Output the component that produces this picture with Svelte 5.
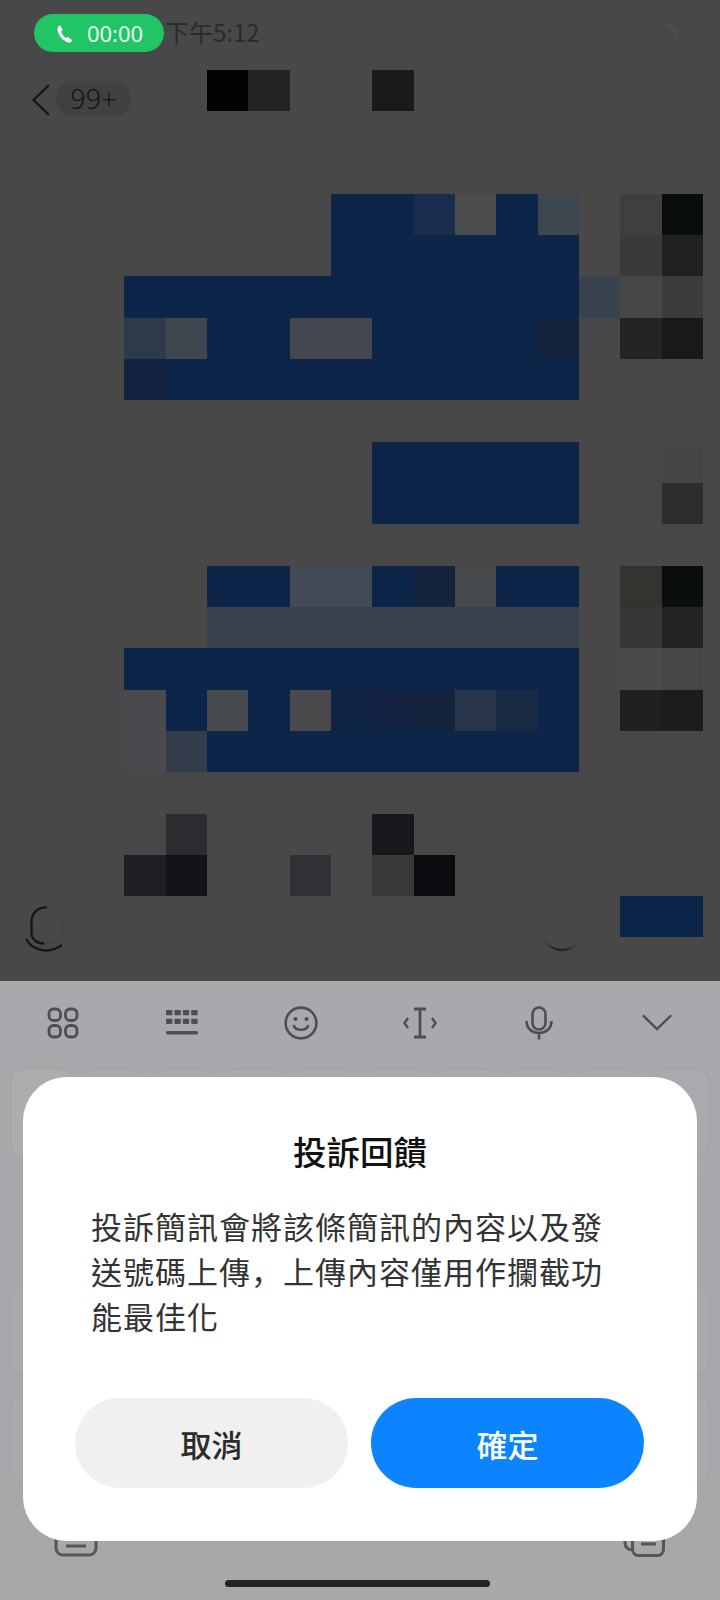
<script>
  const B = '#0c2549';
  const runs = [
    [-3,2,1,'#030303'],[-3,3,1,'#232323'],[-3,6,1,'#1a1a1a'],
    [0,5,2,B],[0,7,1,'#1a2d4c'],[0,8,1,'#4a4c4d'],[0,9,1,B],[0,10,1,'#3f4650'],[0,12,1,'#413f3e'],[0,13,1,'#0a0d0e'],
    [1,5,6,B],[1,12,1,'#3b3a39'],[1,13,1,'#1f2221'],
    [2,0,11,B],[2,11,1,'#39434e'],[2,12,1,'#474747'],[2,13,1,'#3c3c3c'],
    [3,0,1,'#2e394a'],[3,1,1,'#3f4650'],[3,2,2,B],[3,4,2,'#444750'],[3,6,4,B],[3,10,1,'#15233a'],[3,12,1,'#232423'],[3,13,1,'#18191b'],
    [4,0,1,'#142440'],[4,1,10,B],
    [6,6,5,B],[6,12,1,'#484645'],[6,13,1,'#454545'],
    [7,6,5,B],[7,12,1,'#464746'],[7,13,1,'#2c2e2d'],
    [9,2,2,B],[9,4,2,'#414a55'],[9,6,1,B],[9,7,1,'#15233f'],[9,8,1,'#474a4d'],[9,9,2,B],[9,12,1,'#333330'],[9,13,1,'#0b0e0e'],
    [10,2,9,'#394350'],[10,12,1,'#363636'],[10,13,1,'#212325'],
    [11,0,11,B],[11,12,1,'#4b4949'],[11,13,1,'#464646'],
    [12,0,1,'#494a4e'],[12,1,1,B],[12,2,1,'#474a4e'],[12,3,1,B],[12,4,1,'#4a4a4c'],[12,5,1,'#0f2444'],[12,6,1,'#122240'],[12,7,1,'#15243d'],[12,8,1,'#28354a'],[12,9,1,'#192a45'],[12,10,1,B],[12,12,1,'#1f2022'],[12,13,1,'#1c1d1f'],
    [13,0,1,'#494a4e'],[13,1,1,'#333c4a'],[13,2,9,B],
    [15,1,1,'#2b2c30'],[15,6,1,'#17181c'],
    [16,0,1,'#1e2025'],[16,1,1,'#121419'],[16,4,1,'#303136'],[16,6,1,'#393a3a'],[16,7,1,'#090b0f'],
    [17,12,2,'#0c2649']
  ];
  const keyRows = [10, 9, 10, 10];
  const kbCols = [0, 8.4, 16.8, 25.2];
</script>

<div class="page">
  <section class="chat">
    <header class="status">
      <div class="call">
        <svg class="phone" width="20" height="20" viewBox="0 0 18 18"><path d="M4.6 1.2 6.9 5.2 5.6 6.8C6.2 9 7.8 11.4 9.8 12.7L11.6 11.7 15.4 14.6C15 16.2 13.6 17 12 16.6 7.2 15.2 3.2 10.4 2.2 5.4 1.9 3.6 3 1.8 4.6 1.2Z" fill="#fff"/></svg>
        <span>00:00</span>
      </div>
      <span class="time">下午5:12</span>
    </header>

    <div class="nav">
      <svg width="20" height="32" viewBox="0 0 20 32"><path d="M18 1 2.5 16 18 31" fill="none" stroke="#141515" stroke-width="2.2"/></svg>
      <span class="count">99+</span>
    </div>

    <svg class="faint" width="12" height="16" viewBox="0 0 12 16"><path d="M2 1 9 8 10 15" fill="none" stroke="#535353" stroke-width="1.6"/></svg>

    <div class="mosaic">
      {#each runs as [r, c, s, color]}
        <i style="grid-row:{r + 4};grid-column:{c + 1} / span {s};background:{color}"></i>
      {/each}
    </div>

    <svg class="mic-left" width="42" height="50" viewBox="0 0 42 50" fill="none">
      <path d="M23 1.500C31 2 37 8 38 16V27C37.500 33 30 37.500 20 37.500" stroke="#424343" stroke-width="1.500"/>
      <path d="M23 1.500C13 1 7.500 8 7.500 16V27C7.500 33 13 37.500 20 37.500" stroke="#151617" stroke-width="2.300"/>
      <path d="M2 33C8 44 24 49 38 39" stroke="#151617" stroke-width="2.400"/>
    </svg>
    <svg class="arc-right" width="44" height="26" viewBox="0 0 44 26" fill="none">
      <defs>
        <linearGradient id="arcfade" x1="0" x2="1" y1="0" y2="0">
          <stop offset="0" stop-color="#4a4b4a"/>
          <stop offset="0.45" stop-color="#1e1f20"/>
          <stop offset="1" stop-color="#454645"/>
        </linearGradient>
      </defs>
      <path d="M2 7C8 19 24 26 38 13" stroke="url(#arcfade)" stroke-width="2.400"/>
    </svg>
  </section>

  <section class="ime">
    <div class="tools">
      <div class="tool">
        <svg width="32" height="32" viewBox="0 0 32 32" fill="none" stroke="#4d4e52" stroke-width="2.800">
          <rect x="2" y="2" width="11.500" height="11.500" rx="4.500"/><rect x="18.500" y="2" width="11.500" height="11.500" rx="4.500"/>
          <rect x="2" y="18.500" width="11.500" height="11.500" rx="4.500"/><rect x="18.500" y="18.500" width="11.500" height="11.500" rx="4.500"/>
        </svg>
      </div>
      <div class="tool">
        <svg width="32" height="26" viewBox="0 0 32 26" fill="#4d4e52">
          {#each kbCols as x}
            <rect {x} y="0" width="6.400" height="5.200" rx="1"/>
            <rect {x} y="8.800" width="6.400" height="5.200" rx="1"/>
          {/each}
          <rect x="0" y="21" width="32" height="3.400" rx="1.600"/>
        </svg>
      </div>
      <div class="tool">
        <svg width="34" height="34" viewBox="0 0 34 34" fill="none" stroke="#4d4e52" stroke-width="2.600">
          <circle cx="17" cy="17" r="15.400"/>
          <circle cx="11.500" cy="13" r="2" fill="#4d4e52" stroke="none"/><circle cx="22.500" cy="13" r="2" fill="#4d4e52" stroke="none"/>
          <path d="M10 20C12 25 22 25 24 20" stroke-linecap="round"/>
        </svg>
      </div>
      <div class="tool">
        <svg width="34" height="32" viewBox="0 0 34 32" fill="none" stroke="#4d4e52">
          <path d="M11 2H23M17 2V30M11 30H23" stroke-width="2.800"/>
          <path d="M5 11 1.500 16 5 21M29 11 32.500 16 29 21" stroke-width="2.400"/>
        </svg>
      </div>
      <div class="tool">
        <svg width="28" height="34" viewBox="0 0 28 34" fill="none" stroke="#4d4e52" stroke-width="2.600">
          <rect x="7.500" y="1.500" width="13" height="22" rx="6.500"/>
          <path d="M1.500 15C1.500 31 26.500 31 26.500 15M14 27V33.500"/>
        </svg>
      </div>
      <div class="tool">
        <svg width="30" height="18" viewBox="0 0 30 18" fill="none" stroke="#4d4e52" stroke-width="2.400"><path d="M1.500 2 15 15 28.500 2" stroke-linecap="round"/></svg>
      </div>
    </div>

    <div class="keys">
      {#each keyRows as n, i}
        <div class="key-row" class:inset={n === 9}>
          {#each { length: n } as _, k}
            <span class="key" class:first={i === 0 && k === 0}></span>
          {/each}
        </div>
      {/each}
    </div>

    <div class="edit-icons">
      <svg width="44" height="40" viewBox="0 0 44 40" fill="none" stroke="#555659" stroke-width="3">
        <rect x="2" y="2" width="40" height="36" rx="7"/><path d="M12 29H32"/>
      </svg>
      <svg width="42" height="42" viewBox="0 0 42 42" fill="none" stroke="#555659" stroke-width="3">
        <path d="M8 2H7C4 2 2 4 2 7V28C2 32 4 34 8 35"/>
        <rect x="9.500" y="4" width="31" height="36.500" rx="6"/><path d="M18 29H33"/>
      </svg>
    </div>

    <div class="home"></div>
  </section>

  <div class="dialog">
    <h2>投訴回饋</h2>
    <p>投訴簡訊會將該條簡訊的內容以及發送號碼上傳<span class="comma">&#xFF0C;</span>上傳內容僅用作攔截功能最佳化</p>
    <div class="actions">
      <button class="cancel">取消</button>
      <button class="ok">確定</button>
    </div>
  </div>
</div>

<style>
  :global(body) { margin: 0; }
  .page {
    position: relative;
    width: 720px;
    height: 1600px;
    overflow: hidden;
    font-family: "Noto Sans CJK TC", "Noto Sans", sans-serif;
    background: #a8a9ab;
  }
  .chat {
    position: relative;
    height: 981px;
    background: #474847;
  }
  .status {
    height: 69.600px;
    box-sizing: border-box;
    padding: 14px 0 0 34px;
    display: flex;
    align-items: flex-start;
    gap: 1px;
  }
  .call {
    width: 130px;
    height: 38px;
    border-radius: 19px;
    background: #22c565;
    color: #e6fbef;
    display: flex;
    align-items: center;
    justify-content: center;
    gap: 12px;
    font-size: 22px;
    font-family: "Noto Sans", sans-serif;
  }
  .phone { margin-top: 1px; }
  .time {
    font-size: 24px;
    line-height: 38px;
    color: #2a2b2b;
    margin-top: -1px;
  }
  .nav {
    position: absolute;
    left: 31px;
    top: 84px;
    display: flex;
    align-items: flex-start;
    gap: 5px;
  }
  .count {
    width: 75px;
    height: 36px;
    margin-top: -3px;
    border-radius: 18px;
    background: #3f4142;
    color: #141515;
    font-size: 27px;
    line-height: 35px;
    text-align: center;
    font-family: "Noto Sans", sans-serif;
    font-weight: 300;
  }
  .faint { position: absolute; left: 666px; top: 23px; }
  .mosaic {
    margin-left: 124.300px;
    display: grid;
    grid-template-columns: repeat(14, 41.333px);
    grid-template-rows: repeat(21, 41.333px);
  }
  .mic-left { position: absolute; left: 24px; top: 906px; }
  .arc-right { position: absolute; left: 540px; top: 930px; }

  .ime { height: 619px; display: flex; flex-direction: column; background: linear-gradient(#a8a9ad, #a7a8aa); }
  .tools {
    height: 87px;
    flex: none;
    padding: 0 4px;
    display: grid;
    grid-template-columns: repeat(6, 118.800px);
    align-items: center;
    justify-items: center;
  }
  .tool { display: flex; margin-top: -3px; }
  .keys { display: flex; flex-direction: column; gap: 18.500px; padding: 0 10px; }
  .key-row { display: flex; gap: 8.600px; height: 90px; }
  .key-row.inset { padding: 0 36px; }
  .key {
    flex: 1;
    border-radius: 14px;
    background: #a9aaad;
    border: 1px solid #a0a1a4;
    box-sizing: border-box;
  }
  .key.first { background: #adadac; }
  .edit-icons {
    display: flex;
    justify-content: space-between;
    align-items: flex-end;
    padding: 30px 55px 0 54px;
    height: 73px;
    box-sizing: border-box;
  }
  .home {
    width: 265px;
    height: 7px;
    margin: 23.500px 0 0 225px;
    border-radius: 4px;
    background: #222327;
  }

  .dialog {
    position: absolute;
    left: 23px;
    top: 1077px;
    width: 674px;
    height: 464px;
    box-sizing: border-box;
    padding: 49px 52px 0;
    border-radius: 44px;
    background: #fff;
  }
  h2 {
    margin: 0;
    text-align: center;
    font-size: 33.500px;
    line-height: 50px;
    font-weight: 500;
    color: #111;
  }
  p {
    margin: 27px 0 0 16px;
    width: 520px;
    font-size: 31px;
    line-height: 45px;
    letter-spacing: 1px;
    color: #333;
    text-spacing-trim: space-all;
  }
  .comma { font-family: "Noto Sans CJK SC", sans-serif; }
  .actions { position: absolute; left: 52px; right: 53px; bottom: 53px; display: flex; gap: 23px; }
  button {
    flex: 1;
    height: 90px;
    border: 0;
    border-radius: 45px;
    font: 500 31px "Noto Sans CJK TC", sans-serif;
  }
  .cancel { background: #f0f0f0; color: #2b2b2b; }
  .ok { background: #0d84ff; color: #fff; }
</style>
